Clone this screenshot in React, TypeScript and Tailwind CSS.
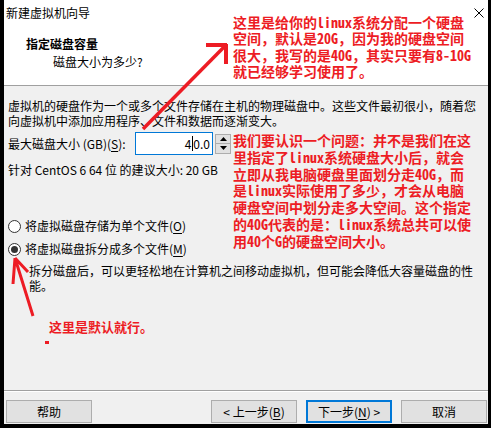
import React from "react";

const redText =
    "absolute whitespace-nowrap font-['Noto_Sans_Mono_CJK_SC','Noto_Sans_CJK_SC',monospace] font-bold text-[#ed1c24]";

const Key = ({ k }: { k: string }) => (
    <>
        (<span className="underline underline-offset-[2px]">{k}</span>)
    </>
);

const Radio = ({ checked, children }: { checked?: boolean; children: React.ReactNode }) => (
    <div className="flex h-4 items-center pl-[4px]">
        <span className="flex h-[13px] w-[13px] items-center justify-center rounded-full border border-[#333] bg-white">
            {checked && <span className="h-[7px] w-[7px] rounded-full bg-[#333]" />}
        </span>
        <span className="ml-[4px] leading-4">{children}</span>
    </div>
);

const SpinBox = () => (
    <div className="flex items-center">
        <div className="flex h-[23px] w-[78px] items-center justify-end border border-[#0078d7] bg-white pr-[2px] leading-4">
            4<span className="mx-[0.5px] inline-block h-[15px] w-px bg-black" />0.0
        </div>
        <div className="ml-[2px] flex h-[20px] w-[16px] flex-col">
            <div className="flex flex-1 items-center justify-center border border-[#adadad] bg-[#e1e1e1]">
                <svg width="7" height="4" viewBox="0 0 7 4">
                    <path d="M0 4 L3.5 0 L7 4 Z" fill="#000" />
                </svg>
            </div>
            <div className="flex flex-1 items-center justify-center border border-t-0 border-[#adadad] bg-[#e1e1e1]">
                <svg width="7" height="4" viewBox="0 0 7 4">
                    <path d="M0 0 L3.5 4 L7 0 Z" fill="#000" />
                </svg>
            </div>
        </div>
    </div>
);

const Btn = ({ primary, children }: { primary?: boolean; children: React.ReactNode }) => (
    <button
        className={
            primary
                ? "flex h-[23px] w-[86px] items-center justify-center border-2 border-[#0078d7] bg-[#e1e1e1] leading-4"
                : "flex h-[23px] w-[86px] items-center justify-center border border-[#adadad] bg-[#e1e1e1] leading-4"
        }
    >
        {children}
    </button>
);

export default function App() {
    return (
        <div className="h-[428px] w-[491px] bg-black pb-[4px] pl-[4px] pr-[3px] font-['Noto_Sans_CJK_SC','Noto_Sans_CJK_TC',sans-serif] text-[12px] text-black">
            <div className="relative flex h-full flex-col bg-[#f0f0f0]">
                <header className="h-[86px] shrink-0 border-b border-[#a0a0a0] bg-white">
                    <div className="flex h-[26px] items-center justify-between pl-[2px] pr-[4px]">
                        <span className="leading-4">新建虚拟机向导</span>
                        <svg width="10" height="10" viewBox="0 0 10 10">
                            <path d="M0.5 0.5 L9.5 9.5 M9.5 0.5 L0.5 9.5" stroke="#000" strokeWidth="1" />
                        </svg>
                    </div>
                    <h1 className="mt-[10px] pl-[22px] font-bold leading-4">指定磁盘容量</h1>
                    <p className="mt-[2px] pl-[49px] leading-4">磁盘大小为多少?</p>
                </header>

                <main className="flex-1 px-[4px] pt-[12px]">
                    <div className="whitespace-nowrap leading-[15px]">
                        <div>虚拟机的硬盘作为一个或多个文件存储在主机的物理磁盘中。这些文件最初很小，随着您</div>
                        <div>向虚拟机中添加应用程序、文件和数据而逐渐变大。</div>
                    </div>
                    <div className="mt-[4px] flex items-center">
                        <span className="w-[127px] whitespace-nowrap leading-4">
                            最大磁盘大小 (GB)<Key k="S" />:
                        </span>
                        <SpinBox />
                    </div>
                    <p className="mt-[7px] leading-4">针对 CentOS 6 64 位 的建议大小: 20 GB</p>

                    <div className="mt-[40px] -ml-[4px]">
                        <Radio>
                            将虚拟磁盘存储为单个文件<Key k="O" />
                        </Radio>
                        <div className="mt-[7px]">
                            <Radio checked>
                                将虚拟磁盘拆分成多个文件<Key k="M" />
                            </Radio>
                        </div>
                    </div>
                    <div className="mt-[6px] ml-[21px] whitespace-nowrap leading-[15px]">
                        <div>拆分磁盘后，可以更轻松地在计算机之间移动虚拟机，但可能会降低大容量磁盘的性</div>
                        <div>能。</div>
                    </div>
                </main>

                <footer className="shrink-0">
                    <div className="h-px bg-[#a0a0a0]" />
                    <div className="h-px bg-white" />
                    <div className="flex items-center pb-[1px] pl-[2px] pr-[1px] pt-[8px]">
                        <Btn>帮助</Btn>
                        <div className="ml-auto flex gap-[9px]">
                            <Btn>&lt; 上一步<Key k="B" /></Btn>
                            <Btn primary>下一步<Key k="N" /> &gt;</Btn>
                            <Btn>取消</Btn>
                        </div>
                    </div>
                </footer>

                {/* red notes drawn over the dialog */}
                <div className={`${redText} left-[229px] top-[14px] text-[14px] leading-[16.3px]`}>
                    <div>这里是给你的linux系统分配一个硬盘</div>
                    <div>空间，默认是20G，因为我的硬盘空间</div>
                    <div>很大，我写的是40G，其实只要有8-10G</div>
                    <div>就已经够学习使用了。</div>
                </div>
                <div className={`${redText} left-[229px] top-[132px] text-[14px] leading-[16.8px]`}>
                    <div>我们要认识一个问题：并不是我们在这</div>
                    <div>里指定了linux系统硬盘大小后，就会</div>
                    <div>立即从我电脑硬盘里面划分走40G，而</div>
                    <div>是linux实际使用了多少，才会从电脑</div>
                    <div>硬盘空间中划分走多大空间。这个指定</div>
                    <div>的40G代表的是：linux系统总共可以使</div>
                    <div>用40个G的硬盘空间大小。</div>
                </div>
                <div className={`${redText} left-[45px] top-[319px] text-[13px] leading-4`}>这里是默认就行。</div>
                <div className="absolute left-[41px] top-[341px] h-[3px] w-[4px] bg-[#ed1c24]" />

                <svg
                    className="pointer-events-none absolute left-0 top-0"
                    width="487"
                    height="424"
                    viewBox="0 0 487 424"
                >
                    <g stroke="#ed1c24" fill="none">
                        <path d="M139 129 L221 46" strokeWidth="3.5" />
                        <path d="M202 45 H223 M222 44 V64" strokeWidth="4" />
                        <path d="M11 258 L29 316 M11 258 L9 284 M11 258 L24 272" strokeWidth="3" />
                    </g>
                </svg>
            </div>
        </div>
    );
}
